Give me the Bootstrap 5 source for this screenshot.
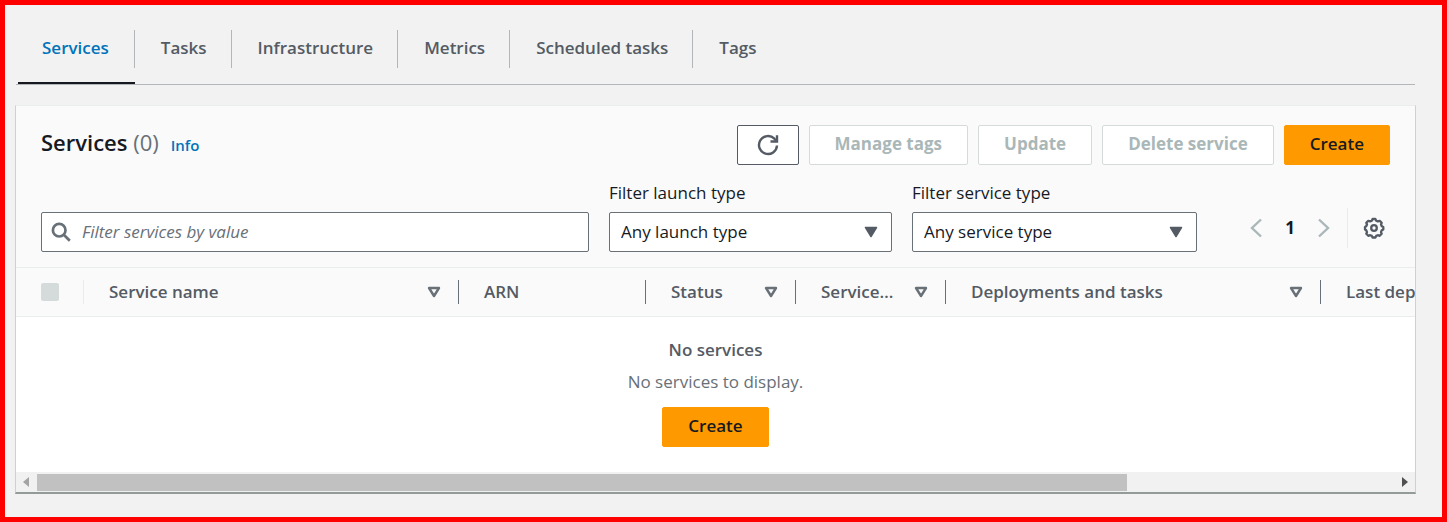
<!DOCTYPE html>
<html lang="en">
<head>
<meta charset="utf-8">
<meta name="viewport" content="width=device-width, initial-scale=1">
<title>Services</title>
<link href="https://cdn.jsdelivr.net/npm/bootstrap@5.3.0/dist/css/bootstrap.min.css" rel="stylesheet">
<script src="https://cdn.jsdelivr.net/npm/bootstrap@5.3.0/dist/js/bootstrap.bundle.min.js" defer></script>
<style>
  body { font-family: "Open Sans", "Noto Sans", sans-serif; font-size: 17px; line-height: 24px; color: #16191f; background: #f2f2f2; }
  .frame { border: 5px solid #f00; padding: 25px 26px 16px 10px; }

  .tabs { border-bottom: 1px solid #b3b7b9; margin: 0 1px; }
  .tabs .nav-item { padding-bottom: 14px; }
  .tabs .nav-item.current { border-bottom: 2px solid #16191f; margin-left: 2px; }
  .tabs .nav-link { color: #545b64; font-weight: 600; padding: 6px 24px 8px 26px; border-right: 1px solid #b3b7b9; }
  .tabs .current .nav-link { color: #0073bb; padding: 6px 25px 8px 24px; }
  .tabs .nav-item:last-child .nav-link { border-right: 0; }

  .panel { margin-top: 20px; background: #fff; border: 1px solid #ccd1d1; border-top-color: #eaeded; border-bottom: 2px solid #929a9a; }
  .panel-top { background: #fafafa; padding: 19px 25px 15px; border-bottom: 1px solid #eaeded; }
  .title { font-size: 22px; line-height: 28px; font-weight: 600; padding-top: 3px; }
  .count { font-weight: 400; color: #687078; }
  .info { font-size: 15px; font-weight: 600; color: #0073bb; text-decoration: none; margin-left: 12px; }

  .actions { gap: 10px; }
  .act { height: 40px; padding: 0 25px 2px; font-size: 17px; line-height: 24px; font-weight: 600; border-radius: 2px; color: #545b64; background: #fff; border: 1px solid #545b64; }
  .act:disabled { color: #aab7b8; background: #fff; border-color: #d5dbdb; opacity: 1; font-weight: 700; }
  .act-main, .act-main:hover { color: #16191f; background: #ff9900; border-color: #ff9900; }
  .act-icon { padding: 0 19px; }

  .field { height: 40px; font-size: 17px; border: 1px solid #687078; border-radius: 2px; color: #16191f; background-color: #fff; }
  .filters { margin-top: 16px; gap: 20px; }
  .filters label { line-height: 24px; margin-bottom: 7px; }
  .search { flex: 548 1 0; }
  .search .form-control { padding: 0 12px 2px 40px; }
  .search .form-control::placeholder { color: #687078; font-style: italic; opacity: 1; }
  .search svg { left: 10px; top: 10px; }
  .launch { flex: 283 1 0; }
  .kind { flex: 285 1 0; }
  .filters .form-select { padding: 0 36px 0 11px; background-image: none; }
  .filters .arrow { right: 14px; top: 14px; pointer-events: none; }
  .pager { flex: 173 1 0; margin-bottom: 4px; }
  .pager button { border: 0; background: none; padding: 0; display: flex; }
  .pager .pages { gap: 21px; padding-right: 15px; }
  .pager .prefs { height: 40px; padding: 0 5px 0 15px; border-left: 1px solid #eaeded; }

  .grid-table { table-layout: fixed; width: 1748px; margin: 0; }
  .grid-table th { background: #fafafa; color: #545b64; font-weight: 600; padding: 12px 0; border-bottom: 1px solid #eaeded; }
  .head { border-left: 1px solid #687078; padding: 0 17px 0 25px; height: 24px; }
  .head.faint { border-left-color: #eaeded; }
  .tick { width: 18px; height: 18px; margin: 3px 0 3px 25px; display: block; border: 0; background: #d5dbdb; }
  .tick[type=checkbox] { border-radius: 2px; }
  .tick:disabled { opacity: 1; }

  .empty { color: #545b64; padding: 21px 0 25px; }
  .empty p { color: #687078; margin: 8px 0 13px; }

  .scroller { height: 20px; background: #f1f1f1; padding: 0 7px; }
  .rail { margin: 0 3px 0 8px; }
  .thumb { height: 17px; width: 80%; background: #c1c1c1; }
</style>
</head>
<body>
<div class="frame min-vh-100">
  <nav aria-label="Cluster sections">
    <ul class="nav tabs">
      <li class="nav-item current"><a class="nav-link" href="#services" aria-current="page">Services</a></li>
      <li class="nav-item"><a class="nav-link" href="#tasks">Tasks</a></li>
      <li class="nav-item"><a class="nav-link" href="#infrastructure">Infrastructure</a></li>
      <li class="nav-item"><a class="nav-link" href="#metrics">Metrics</a></li>
      <li class="nav-item"><a class="nav-link" href="#scheduled">Scheduled tasks</a></li>
      <li class="nav-item"><a class="nav-link" href="#tags">Tags</a></li>
    </ul>
  </nav>

  <main class="panel" id="services">
    <div class="panel-top">
      <div class="d-flex justify-content-between align-items-start">
        <div class="d-flex align-items-baseline">
          <h1 class="title mb-0">Services <span class="count">(0)</span></h1>
          <a class="info" href="#info">Info</a>
        </div>
        <div class="d-flex actions">
          <button type="button" class="btn act act-icon d-flex align-items-center" aria-label="Refresh">
            <svg width="22" height="22" viewBox="0 0 22 22" fill="none" stroke="#545b64" stroke-width="2.4"><path d="M20 11.500a9 9 0 1 1-2.600-6.800l1.800 2"/><path d="M20 1.300v6.200h-6.500"/></svg>
          </button>
          <button type="button" class="btn act" disabled>Manage tags</button>
          <button type="button" class="btn act" disabled>Update</button>
          <button type="button" class="btn act" disabled>Delete service</button>
          <button type="button" class="btn act act-main">Create</button>
        </div>
      </div>

      <div class="filters d-flex align-items-end">
        <div class="search position-relative">
          <input type="search" class="form-control field" placeholder="Filter services by value" aria-label="Filter services by value">
          <svg class="position-absolute" width="20" height="20" viewBox="0 0 20 20" fill="none" stroke="#687078" stroke-width="2.700"><circle cx="8.200" cy="8.200" r="6.300"/><path d="M12.800 12.800l6 6"/></svg>
        </div>
        <div class="launch">
          <label for="launch">Filter launch type</label>
          <div class="position-relative">
            <select id="launch" class="form-select field"><option>Any launch type</option></select>
            <svg class="arrow position-absolute" width="14" height="12" viewBox="0 0 14 12"><path d="M1.500 1.500h11L7 10.500z" fill="#545b64" stroke="#545b64" stroke-width="1.500" stroke-linejoin="round"/></svg>
          </div>
        </div>
        <div class="kind">
          <label for="kind">Filter service type</label>
          <div class="position-relative">
            <select id="kind" class="form-select field"><option>Any service type</option></select>
            <svg class="arrow position-absolute" width="14" height="12" viewBox="0 0 14 12"><path d="M1.500 1.500h11L7 10.500z" fill="#545b64" stroke="#545b64" stroke-width="1.500" stroke-linejoin="round"/></svg>
          </div>
        </div>
        <div class="pager d-flex align-items-center justify-content-end">
          <div class="pages d-flex align-items-center">
            <button type="button" aria-label="Previous page" disabled><svg width="16" height="20" viewBox="0 0 16 20" fill="none" stroke="#aab7b8" stroke-width="2.400"><path d="M13 1.500L4 10l9 8.500"/></svg></button>
            <span class="fw-bold">1</span>
            <button type="button" aria-label="Next page" disabled><svg width="16" height="20" viewBox="0 0 16 20" fill="none" stroke="#aab7b8" stroke-width="2.400"><path d="M3 1.500L12 10l-9 8.500"/></svg></button>
          </div>
          <button type="button" class="prefs align-items-center" aria-label="Preferences">
            <svg width="22" height="22" viewBox="0 0 22 22" fill="none" stroke="#545b64" stroke-width="2.300" stroke-linejoin="round"><path d="M8.800 3.700L9.600 2h2.800l.8 1.700 1.700.7 1.800-.6 2 2-.7 1.700.8 1.800 1.500.7v2.500l-1.500.8-.8 1.800.7 1.700-2 2-1.800-.6-1.700.7-.8 1.600H9.600l-.8-1.600-1.700-.7-1.800.6-2-2 .7-1.700-.8-1.800L2 12.500V10l1.200-.7L4 7.500l-.7-1.700 2-2 1.800.6z"/><circle cx="11" cy="11" r="2.800"/></svg>
          </button>
        </div>
      </div>
    </div>

    <div class="overflow-hidden">
      <table class="grid-table">
        <colgroup><col style="width:67px"><col style="width:375px"><col style="width:187px"><col style="width:150px"><col style="width:150px"><col style="width:375px"><col></colgroup>
        <thead>
          <tr>
            <th scope="col"><input type="checkbox" class="form-check-input tick" aria-label="Select all services" disabled></th>
            <th scope="col"><div class="head faint d-flex align-items-center justify-content-between">Service name <svg width="14" height="12" viewBox="0 0 14 12"><path d="M2 2h10L7 10z" fill="none" stroke="#687078" stroke-width="2.400" stroke-linejoin="round"/></svg></div></th>
            <th scope="col"><div class="head">ARN</div></th>
            <th scope="col"><div class="head d-flex align-items-center justify-content-between">Status <svg width="14" height="12" viewBox="0 0 14 12"><path d="M2 2h10L7 10z" fill="none" stroke="#687078" stroke-width="2.400" stroke-linejoin="round"/></svg></div></th>
            <th scope="col"><div class="head d-flex align-items-center justify-content-between">Service… <svg width="14" height="12" viewBox="0 0 14 12"><path d="M2 2h10L7 10z" fill="none" stroke="#687078" stroke-width="2.400" stroke-linejoin="round"/></svg></div></th>
            <th scope="col"><div class="head d-flex align-items-center justify-content-between">Deployments and tasks <svg width="14" height="12" viewBox="0 0 14 12"><path d="M2 2h10L7 10z" fill="none" stroke="#687078" stroke-width="2.400" stroke-linejoin="round"/></svg></div></th>
            <th scope="col"><div class="head">Last dep</div></th>
          </tr>
        </thead>
      </table>
    </div>

    <div class="empty text-center">
      <div class="fw-semibold">No services</div>
      <p>No services to display.</p>
      <button type="button" class="btn act act-main">Create</button>
    </div>

    <div class="scroller d-flex align-items-center" aria-hidden="true">
      <svg width="6" height="10" viewBox="0 0 6 10"><path d="M6 0v10L0 5z" fill="#a3a3a3"/></svg>
      <div class="rail flex-grow-1"><div class="thumb"></div></div>
      <svg width="6" height="10" viewBox="0 0 6 10"><path d="M0 0v10l6-5z" fill="#505050"/></svg>
    </div>
  </main>
</div>
</body>
</html>
